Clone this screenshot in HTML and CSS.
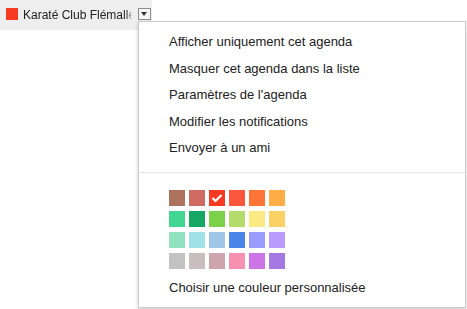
FILE: index.html
```html
<html>
	<head>
		<link rel="stylesheet" href="styles.css">
	</head>
	<body>
		<div class="cal_row">
			<span class="cal_color"></span>
			<span class="cal_name">Karaté Club Flémalle</span>
			<span class="cal_drop"></span>
		</div>

		<div class="cal_menu">
			<div class="menu_item">Afficher uniquement cet agenda</div>
			<div class="menu_item">Masquer cet agenda dans la liste</div>
			<div class="menu_item">Paramètres de l'agenda</div>
			<div class="menu_item">Modifier les notifications</div>
			<div class="menu_item">Envoyer à un ami</div>
			<div class="menu_sep"></div>
			<div class="palette">
				<span class="chip" style="background: #ac725e"></span>
				<span class="chip" style="background: #d06b64"></span>
				<span class="chip checked" style="background: #f83a22">
					<svg width="16" height="16" viewBox="0 0 16 16"><polyline points="3.5,8 6.5,11 12.5,5" fill="none" stroke="#fff" stroke-width="2.2"/></svg>
				</span>
				<span class="chip" style="background: #fa573c"></span>
				<span class="chip" style="background: #ff7537"></span>
				<span class="chip" style="background: #ffad46"></span>
				<span class="chip" style="background: #42d692"></span>
				<span class="chip" style="background: #16a765"></span>
				<span class="chip" style="background: #7bd148"></span>
				<span class="chip" style="background: #b3dc6c"></span>
				<span class="chip" style="background: #fbe983"></span>
				<span class="chip" style="background: #fad165"></span>
				<span class="chip" style="background: #92e1c0"></span>
				<span class="chip" style="background: #9fe1e7"></span>
				<span class="chip" style="background: #9fc6e7"></span>
				<span class="chip" style="background: #4986e7"></span>
				<span class="chip" style="background: #9a9cff"></span>
				<span class="chip" style="background: #b99aff"></span>
				<span class="chip" style="background: #c2c2c2"></span>
				<span class="chip" style="background: #cabdbf"></span>
				<span class="chip" style="background: #cca6ac"></span>
				<span class="chip" style="background: #f691b2"></span>
				<span class="chip" style="background: #cd74e6"></span>
				<span class="chip" style="background: #a47ae2"></span>
			</div>
			<div class="menu_item custom">Choisir une couleur personnalisée</div>
		</div>
	</body>
</html>
```

FILE: styles.css
```css
* {
	margin: 0;
	padding: 0;
	box-sizing: border-box;
}

body {
	background: #fff;
	font-family: "Liberation Sans", Arial, sans-serif;
	font-size: 13px;
	color: #222;
	position: relative;
	height: 100vh;
	overflow: hidden;
}

.cal_row {
	width: 152px;
	height: 30px;
	background: #eee;
	display: flex;
	align-items: center;
	padding-left: 6px;
}

.cal_color {
	flex: none;
	width: 12px;
	height: 12px;
	background: #f83a22;
	margin-top: -2px;
	margin-right: 5px;
}

.cal_name {
	flex: none;
	width: 109px;
	margin-right: 6px;
	font-size: 12px;
	white-space: nowrap;
	overflow: hidden;
	margin-top: -1px;
	-webkit-mask-image: linear-gradient(90deg, #000 103px, rgba(0, 0, 0, 0.15) 109px);
	mask-image: linear-gradient(90deg, #000 103px, rgba(0, 0, 0, 0.15) 109px);
}

.cal_drop {
	flex: none;
	position: relative;
	width: 13px;
	height: 12px;
	margin-top: -3px;
	border: 1px solid #8c8c8c;
	background: #f4f4f4;
}

.cal_drop::after {
	content: '';
	position: absolute;
	left: 2px;
	top: 3px;
	border-left: 3.5px solid transparent;
	border-right: 3.5px solid transparent;
	border-top: 4px solid #333;
}

.cal_menu {
	position: absolute;
	left: 138px;
	top: 21px;
	width: 328px;
	background: #fff;
	border: 1px solid #ccc;
	box-shadow: 0 2px 4px rgba(0, 0, 0, 0.2);
	padding: 7px 0 6px;
}

.menu_item {
	height: 26.5px;
	line-height: 26.5px;
	padding-left: 30px;
	white-space: nowrap;
}

.menu_sep {
	height: 1px;
	background: #e5e5e5;
	margin: 10px 0 17px;
}

.palette {
	display: grid;
	grid-template-columns: repeat(6, 16px);
	grid-auto-rows: 16px;
	column-gap: 4px;
	row-gap: 5px;
	padding-left: 30px;
}

.chip {
	display: block;
	width: 16px;
	height: 16px;
}

.chip svg {
	display: block;
}

.custom {
	margin-top: 6px;
}
```
